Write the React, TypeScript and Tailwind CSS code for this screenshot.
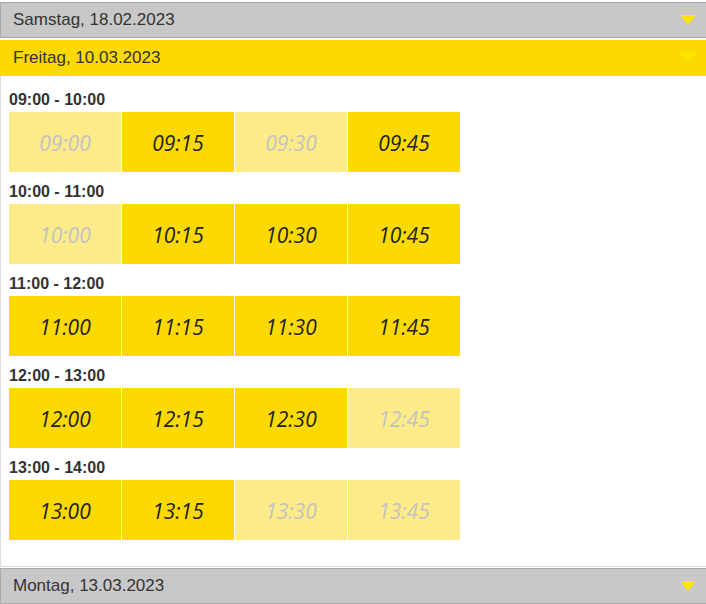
import * as React from "react";

const groups = [
  { label: "09:00 - 10:00", slots: [["09:00", false], ["09:15", true], ["09:30", false], ["09:45", true]] },
  { label: "10:00 - 11:00", slots: [["10:00", false], ["10:15", true], ["10:30", true], ["10:45", true]] },
  { label: "11:00 - 12:00", slots: [["11:00", true], ["11:15", true], ["11:30", true], ["11:45", true]] },
  { label: "12:00 - 13:00", slots: [["12:00", true], ["12:15", true], ["12:30", true], ["12:45", false]] },
  { label: "13:00 - 14:00", slots: [["13:00", true], ["13:15", true], ["13:30", false], ["13:45", false]] },
] as const;

function Caret() {
  return (
    <svg width="16" height="10" viewBox="0 0 16 10" className="shrink-0">
      <polygon points="0,0 16,0 8,10" fill="#ffe500" />
    </svg>
  );
}

function DayHeader({ title, open }: { title: string; open?: boolean }) {
  return (
    <div
      className={`flex items-center justify-between h-[36px] pl-3 pr-[10px] border-l ${
        open ? "bg-[#fcd900] border-[#fcd900]" : "bg-[#c8c8c8] border-y border-[#a9a9a9]"
      }`}
    >
      <span className="text-[17px] text-[#333]">{title}</span>
      <Caret />
    </div>
  );
}

export default function App() {
  return (
    <div className="w-[706px] h-[604px] overflow-hidden bg-white pt-[2px] font-['Liberation_Sans',Arial,sans-serif]">
      <DayHeader title="Samstag, 18.02.2023" />
      <div className="h-[2px]" />
      <DayHeader title="Freitag, 10.03.2023" open />

      {/* Time slots */}
      <div className="border-l border-b border-[#dddddd] pl-2 pt-[15px] pb-[26px] flex flex-col gap-[11px]">
        {groups.map((g) => (
          <div key={g.label}>
            <p className="text-[16px] leading-[18px] font-bold text-[#333] mb-[3px]">{g.label}</p>
            <div className="grid grid-cols-[repeat(4,112px)] gap-x-px">
              {g.slots.map(([time, available]) => (
                <div
                  key={time}
                  className={`h-[60px] flex items-center justify-center italic text-[21px] font-['Open_Sans',sans-serif] ${
                    available ? "bg-[#fcd900] text-[#222]" : "bg-[#fdeb8a] text-[#c2c2c2]"
                  }`}
                >
                  <span className="translate-y-[2px]">{time}</span>
                </div>
              ))}
            </div>
          </div>
        ))}
      </div>

      <div className="h-px" />
      <DayHeader title="Montag, 13.03.2023" />
    </div>
  );
}
